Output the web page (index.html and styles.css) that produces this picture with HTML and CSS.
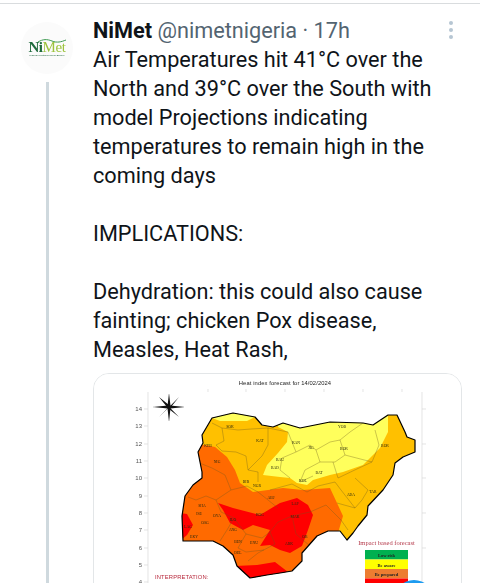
FILE: index.html
```html
<!DOCTYPE html>
<html lang="en">
<head>
<meta charset="utf-8">
<title>NiMet tweet</title>
<link rel="stylesheet" href="styles.css">
</head>
<body>
<div class="rule"></div>
<article class="tweet">
  <aside class="gutter">
    <div class="avatar">
      <div class="logo">
        <svg class="swoosh" viewBox="0 0 28 4" width="28" height="4"><path d="M0 3C5 0 9 0 14 2S23 3 28 1" fill="none" stroke="#3f9a52" stroke-width="1"/></svg>
        <span class="logo-word"><span class="ni">Ni</span><span class="met">Met</span></span>
        <span class="logo-sub">Nigerian Meteorological Agency</span>
      </div>
    </div>
    <div class="thread"></div>
  </aside>
  <main class="content">
    <header class="head">
      <div class="byline"><strong class="name">NiMet</strong> <span class="meta">@nimetnigeria · 17h</span></div>
      <div class="menu"><i></i><i></i><i></i></div>
    </header>
    <p class="body">Air Temperatures hit 41°C over the North and 39°C over the South with model Projections indicating temperatures to remain high in the coming days</p>
    <p class="body gap">IMPLICATIONS:</p>
    <p class="body gap">Dehydration: this could also cause fainting; chicken Pox disease, Measles, Heat Rash,</p>
    <figure class="card">
      <svg class="map" viewBox="94 374 367 260" width="367" height="260" role="img">
        <rect x="94" y="374" width="367" height="260" fill="#fff"/>
        <text class="m-title" x="285" y="385" text-anchor="middle">Heat index forecast for 14/02/2024</text>
        <g class="axis">
          <path d="M148 392V640M422 392V640"/>
          <path d="M144 409h4M144 426h4M144 444h4M144 461h4M144 478h4M144 496h4M144 513h4M144 530h4M144 548h4M144 565h4M144 582h4"/>
          <path d="M422 409h4M422 444h4M422 478h4M422 513h4M422 548h4"/>
          <path d="M208 389v3M246 389v3M285 389v3M324 389v3M363 389v3M402 389v3"/>
        </g>
        <g class="ticks">
          <text x="142" y="411">14</text><text x="142" y="428">13</text><text x="142" y="446">12</text><text x="142" y="463">11</text><text x="142" y="480">10</text><text x="142" y="498">9</text><text x="142" y="515">8</text><text x="142" y="532">7</text><text x="142" y="550">6</text><text x="142" y="567">5</text><text x="142" y="584">4</text>
        </g>
        <g class="compass">
          <path class="c-thin" d="M153 407h31M169 394v27"/>
          <path d="M159 397L170.200 406 179 397 170.200 408 179 417 168 408.200 159 417 167.800 408Z"/>
          <path d="M169 394L170.500 405.500 184 407 170.500 408.500 169 421 167.500 408.500 154 407 167.500 405.500Z"/>
        </g>
        <clipPath id="ng"><path d="M212 418L233 413 255 417 262 425 273 427 283 423 300 428 330 422 363 423 373 425 388 415 397 415 405 432 407 437 415 440 415 452 403 457 395 463 393 475 383 490 368 506 367 515 358 526 353 533 347 540 340 531 328 531 317 536 302 553 302 561 292 571 280 573 267 575 250 578 237 566 233 555 223 546 213 541 183 541 182 516 185 496 193 485 202 478 202 472 198 452 203 443 202 435Z"/></clipPath>
        <g clip-path="url(#ng)">
          <rect x="170" y="405" width="260" height="180" fill="#ffc000"/>
          <path fill="#ffff5c" d="M212 418L233 412 255 417 247 421 220 421Z"/>
          <path fill="#ffff5c" d="M278 420L388 410 388 432 380 448 363 465 343 472 330 475 313 480 307 485 297 483 290 478 280 477 263 475 267 465 278 453 287 442 288 432 278 427Z"/>
          <path fill="#ff6a00" d="M190 445L205 445 215 447 227 457 235 470 240 483 253 492 283 488 303 490 330 488 337 503 343 516 338 533 320 540 302 560 290 580 180 585 170 500Z"/>
          <path fill="#ff0000" d="M218 503L233 508 260 515 280 503 297 498 308 505 313 515 308 530 302 546 290 553 280 550 270 545 260 546 270 530 253 525 243 530 230 523 223 510Z"/>
          <path fill="#ff0000" d="M180 513L187 514 193 525 187 535 180 541Z"/>
          <path fill="#ff0000" d="M235 566L257 565 275 562 288 572 292 580 240 582Z"/>
          <g class="lga">
            <path d="M212 423L222 428 224 441 216 445 222 451 236 452 246 456 248 470 258 472 258 482"/>
            <path d="M222 428L238 430 251 429 268 428 268 445 262 456 248 470"/>
            <path d="M268 428L288 432 296 452 310 445 316 450 320 462 305 470 300 482 313 476"/>
            <path d="M296 452L282 458 280 470 290 478M316 450L330 442 340 440 350 432 363 423M345 455L372 462 379 445 375 430"/>
            <path d="M333 462L338 478 359 468 372 462M320 462L335 462 345 455 340 440"/>
            <path d="M197 462L212 468 225 475 231 490 216 500 206 496 196 500 188 497M231 490L247 486 258 492 268 500 278 508"/>
            <path d="M216 500L221 512 234 518 227 530 220 541M234 518L246 534 238 548 246 552 264 550"/>
            <path d="M246 534L262 538 270 532 275 544 258 553 248 561M270 532L278 522 292 516 310 512M292 516L296 534 310 546 302 556"/>
            <path d="M310 512L326 505 341 520 348 530M341 490L355 508 362 500 368 490 355 478M337 503L355 508"/>
            <path d="M270 490L292 484 307 492 318 486 335 482 341 490"/>
          </g>
        </g>
        <path class="outline" d="M212 418L233 413 255 417 262 425 273 427 283 423 300 428 330 422 363 423 373 425 388 415 397 415 405 432 407 437 415 440 415 452 403 457 395 463 393 475 383 490 368 506 367 515 358 526 353 533 347 540 340 531 328 531 317 536 302 553 302 561 292 571 280 573 267 575 250 578 237 566 233 555 223 546 213 541 183 541 182 516 185 496 193 485 202 478 202 472 198 452 203 443 202 435Z"/>
        <g class="lbl">
          <text x="230" y="428">SOK</text><text x="208" y="447">KEB</text><text x="217" y="463">NIG</text><text x="260" y="442">KAT</text><text x="296" y="444">KAN</text><text x="311" y="449">JIG</text><text x="344" y="450">BOR</text><text x="342" y="428">YOB</text><text x="385" y="447">BOR</text><text x="246" y="483">BIR</text><text x="257" y="487">NGR</text><text x="280" y="461">BAU</text><text x="275" y="469">BAD</text><text x="303" y="482">KOL</text><text x="319" y="474">BAT</text><text x="271" y="499">ABJ</text><text x="351" y="496">ADA</text><text x="373" y="493">TAR</text><text x="295" y="505">LAP</text><text x="295" y="518">MAK</text><text x="289" y="545">ARK</text><text x="305" y="538">OB</text><text x="202" y="507">SHA</text><text x="199" y="515">ISE</text><text x="217" y="517">OYA</text><text x="205" y="524">OSG</text><text x="233" y="521">ILO</text><text x="233" y="531">ANG</text><text x="188" y="528">LAG</text><text x="194" y="538">EKY</text><text x="238" y="543">BEN</text><text x="254" y="544">ENU</text><text x="238" y="554">DEL</text><text x="260" y="516">KOG</text>
        </g>
        <text class="impact" x="386.500" y="545" text-anchor="middle">Impact based forecast</text>
        <g class="legend">
          <rect x="365" y="550" width="43" height="9.500" fill="#00b050"/>
          <rect x="365" y="559.500" width="43" height="9.500" fill="#ffff00"/>
          <rect x="365" y="569" width="43" height="9.500" fill="#ed7d31"/>
          <rect x="365" y="578.500" width="43" height="9.500" fill="#ff0000"/>
          <text x="386.500" y="557">Low risk</text>
          <text x="386.500" y="566.500">Be aware</text>
          <text x="386.500" y="576">Be prepared</text>
          <text x="386.500" y="585.500">Take action</text>
        </g>
        <text class="interp" x="155" y="579">INTERPRETATION:</text>
      </svg>
    </figure>
  </main>
</article>
<div class="fab"></div>
</body>
</html>
```
FILE: styles.css
```css
* { box-sizing: border-box; }
html, body { margin: 0; height: 583px; overflow: hidden; background: #fff; }
body { font-family: Roboto, "Liberation Sans", sans-serif; color: #0f1419; position: relative; }
.rule { height: 1px; margin-top: 3px; background: #d9dcde; }
.tweet { display: flex; height: 579px; }
.gutter { width: 93px; flex: none; display: flex; flex-direction: column; align-items: center; padding: 18px 0 0 1px; }
.avatar { width: 52px; height: 52px; border-radius: 50%; background: #fbfbfb; display: flex; align-items: center; justify-content: center; flex: none; }
.logo { display: flex; flex-direction: column; align-items: center; filter: blur(.35px); }
.swoosh { display: block; margin: 0 0 -2px 10px; }
.logo-word { font-family: "Liberation Serif", serif; font-size: 15px; line-height: 13px; letter-spacing: -.4px; }
.ni { color: #1f6b3c; font-weight: 700; }
.met { color: #9cc33c; }
.logo-sub { font-size: 2.500px; line-height: 4px; color: #2f6f4a; white-space: nowrap; }
.thread { width: 3px; flex: 1; margin: 8px 0 0 1px; background: #cfd9de; }
.content { flex: 1; min-width: 0; padding-top: 12px; padding-right: 18px; }
.head { display: flex; justify-content: space-between; height: 29px; }
.byline { font-size: 21.700px; line-height: 29px; white-space: nowrap; }
.name { font-weight: 700; }
.meta { color: #536471; }
.menu { display: flex; flex-direction: column; gap: 3px; padding: 5px 9px 0 0; }
.menu i { width: 4px; height: 4px; border-radius: 50%; background: #b6c6d3; }
.body { margin: 0; width: 350px; font-size: 21.700px; line-height: 29px; }
.gap { margin-top: 29px; }
.card { margin: 9px 0 0; width: 369px; height: 300px; border: 1px solid #e3e6e8; border-radius: 16px; overflow: hidden; }
.map { display: block; filter: blur(.35px); }
.map text { font-family: "Liberation Sans", sans-serif; }
.m-title { font-size: 5.800px; fill: #222; letter-spacing: .1px; }
.axis path { stroke: #d9d9d9; stroke-width: .7; fill: none; }
.ticks text { font-size: 6px; fill: #555; text-anchor: end; }
.compass path { fill: #111; stroke: none; }
.compass .c-thin { fill: none; stroke: #666; stroke-width: .4; }
.outline { fill: none; stroke: #000; stroke-width: 1.200; stroke-linejoin: round; }
.lga path { fill: none; stroke: #6b5a20; stroke-width: .35; }
.map .lbl text { font-family: "Liberation Serif", serif; font-size: 3.800px; fill: #2a2a10; text-anchor: middle; }
.map .impact { font-family: "Liberation Serif", serif; font-size: 6.500px; fill: #b5394a; }
.map .legend text { font-family: "Liberation Serif", serif; font-size: 4.500px; font-weight: 700; fill: #222; text-anchor: middle; }
.interp { font-size: 5.800px; fill: #b8283c; letter-spacing: .15px; }
.fab { position: absolute; left: 394px; top: 580px; width: 40px; height: 40px; border-radius: 50%; background: #1d9bf0; }
```
